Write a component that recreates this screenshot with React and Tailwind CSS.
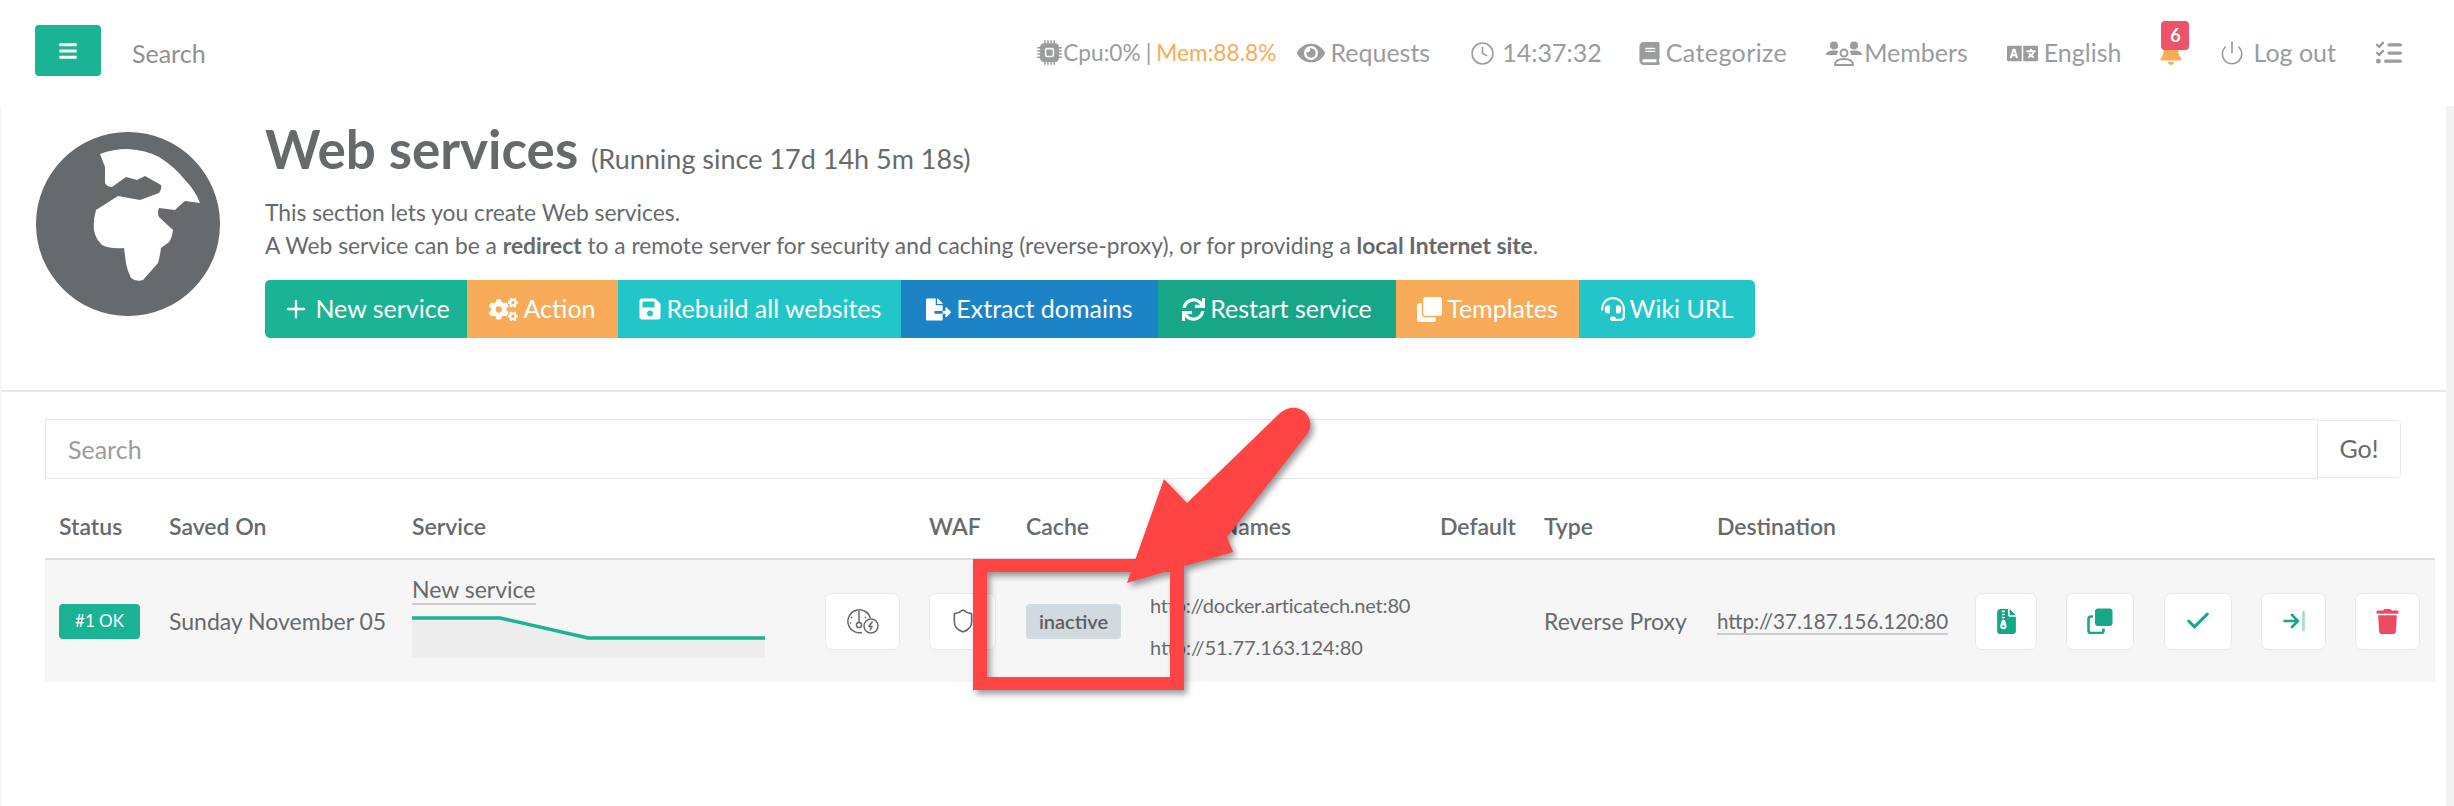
import { Check, Clock, Plus, Power, Shield } from "lucide-react";
import { BsCpuFill } from "react-icons/bs";
import {
  FaBars,
  FaBell,
  FaBook,
  FaClone,
  FaCogs,
  FaEye,
  FaFileExport,
  FaHeadset,
  FaLanguage,
  FaSave,
  FaSync,
  FaTrash,
} from "react-icons/fa";
import { FaFileZipper, FaListCheck } from "react-icons/fa6";

const toolbar = [
  { label: "New service", Icon: Plus, size: 28, width: "w-[202px]", color: "bg-[#1ab394]", round: "rounded-l-[5px]" },
  { label: "Action", Icon: FaCogs, size: 29, width: "w-[151px]", color: "bg-[#f8ac59]" },
  { label: "Rebuild all websites", Icon: FaSave, size: 24, width: "w-[283px]", color: "bg-[#23c6c8]" },
  { label: "Extract domains", Icon: FaFileExport, size: 25, width: "w-[257px]", color: "bg-[#1c84c6]" },
  { label: "Restart service", Icon: FaSync, size: 23, width: "w-[238px]", color: "bg-[#18a689]" },
  { label: "Templates", Icon: FaClone, size: 25, width: "w-[183px]", color: "bg-[#f8ac59]" },
  { label: "Wiki URL", Icon: FaHeadset, size: 24, width: "w-[176px]", color: "bg-[#23c6c8]", round: "rounded-r-[5px]" },
];

function GaugeIcon() {
  return (
    <svg width="32" height="25" viewBox="0 0 32 25" fill="none" stroke="#676a6c" strokeWidth="1.5">
      <path d="M15 23.5A11.5 11.5 0 1 1 23.4 9" />
      <path d="M12 2v11" />
      <circle cx="12" cy="16" r="2.6" />
      <circle cx="24" cy="17" r="7" />
      <path d="M25.5 12.5l-3.5 5h3l-2 4" strokeLinejoin="round" />
      <path d="M4 8l1 1M3 14h1M19 8l-1 1" />
    </svg>
  );
}

function MembersIcon() {
  return (
    <svg width="36" height="25" viewBox="0 0 36 25" fill="#9a9c9e">
      <circle cx="8" cy="4.5" r="4" />
      <circle cx="28" cy="4.5" r="4" />
      <path d="M0 14c0-3 3-4.500 8-4.500 2 0 3.500.3 4.500 1-1 1-1.500 2-1.500 3.500H0z" />
      <path d="M36 14c0-3-3-4.500-8-4.500-2 0-3.500.3-4.500 1 1 1 1.500 2 1.500 3.500h11z" />
      <circle cx="18" cy="12" r="3.500" fill="none" stroke="#9a9c9e" strokeWidth="2" />
      <path d="M9 24c0-4 3-6 9-6s9 2 9 6z" fill="none" stroke="#9a9c9e" strokeWidth="2" />
    </svg>
  );
}

function ArrowToLineIcon() {
  return (
    <svg width="22" height="20" viewBox="0 0 22 20" fill="none" stroke="#18a689" strokeWidth="2.600" strokeLinecap="round" strokeLinejoin="round">
      <path d="M1.500 10h13M9 4l6 6-6 6" />
      <path d="M20.500 1v18" opacity="0.4" />
    </svg>
  );
}

function CloneIcon() {
  return (
    <svg width="26" height="26" viewBox="0 0 26 26" fill="none">
      <rect x="8" y="0.500" width="17.500" height="17.500" rx="3" fill="#18a689" />
      <path d="M6 8.500H4A2.500 2.500 0 0 0 1.500 11V22.500A2.500 2.500 0 0 0 4 25h10a2.500 2.500 0 0 0 2.500-2.500V20.500" stroke="#18a689" strokeWidth="2.600" />
    </svg>
  );
}

function RowButton({ width, children }) {
  return (
    <button className={`${width} h-[57px] flex items-center justify-center bg-white border border-[#e7eaec] rounded-[7px]`}>
      {children}
    </button>
  );
}

export default function App() {
  return (
    <div className="relative min-h-[806px] bg-[#f3f3f4] text-[#676a6c] font-['Lato','Liberation_Sans',sans-serif] overflow-hidden">
      <nav className="h-[106px] bg-white flex items-start pt-[25px] pl-[35px] text-[25px] text-[#9a9c9e]">
        <button className="w-[66px] h-[51px] bg-[#1ab394] rounded-[4px] flex items-center justify-center text-white">
          <FaBars size={20} />
        </button>
        <input
          placeholder="Search"
          className="ml-[31px] w-[200px] h-[56px] text-[25px] outline-none placeholder:text-[#8f9193]"
        />
        <div className="ml-auto h-[56px] flex items-center pr-[52px]">
          <span className="flex items-center text-[22.7px]">
            <BsCpuFill size={25} className="mr-[1px]" />
            Cpu:0%
            <span className="mx-[5px]">|</span>
            <span className="text-[#f8ac59]">Mem:88.8%</span>
          </span>
          <span className="ml-[21px] flex items-center gap-[5px]">
            <FaEye size={28} />
            Requests
          </span>
          <span className="ml-[40px] flex items-center gap-[7px]">
            <Clock size={25} strokeWidth={1.500} />
            14:37:32
          </span>
          <span className="ml-[36px] flex items-center gap-[5px] tracking-[0.4px]">
            <FaBook size={23} />
            Categorize
          </span>
          <span className="ml-[39px] flex items-center gap-[2px]">
            <MembersIcon />
            Members
          </span>
          <span className="ml-[39px] flex items-center gap-[6px]">
            <FaLanguage size={31} />
            English
          </span>
          <span className="relative ml-[36px] w-[28px] flex justify-center">
            <FaBell size={24} className="text-[#f8ac59]" />
            <span className="absolute left-[4px] -top-[20px] w-[28px] h-[29px] rounded-[4px] bg-[#ef5369] text-white text-[18px] font-bold flex items-center justify-center">
              6
            </span>
          </span>
          <span className="ml-[34px] flex items-center gap-[8px]">
            <Power size={26} strokeWidth={1.500} />
            Log out
          </span>
          <FaListCheck size={26} className="ml-[40px]" />
        </div>
      </nav>

      <main className="ml-px mr-[8px] h-[700px] bg-white">
        <section className="h-[286px] border-b-2 border-[#e7eaec] flex pt-[26px] pl-[35px]">
          <svg width="184" height="184" viewBox="36 132 184 184" className="shrink-0">
            <circle cx="128" cy="224" r="92" fill="#676a6c" />
            <path
              fill="#fff"
              d="M100 154Q113 149 128 149Q146 150 159 157Q175 167 185 180Q195 190 200 203L185 201Q180 205 175 210L159 208Q157 212 159 217L173 230Q172 238 169 242L161 248Q160 256 158 263L143 280Q136 282 131 278Q127 270 126 263L124 248Q110 249 102 245Q95 238 94 230Q93 220 96 210L118 196L140 200L159 193Q162 189 161 185L145 176L137 180L126 177L112 187Q107 187 105 183L105 167Z"
            />
          </svg>
          <div className="ml-[45px]">
            <h2 className="-mt-[6px] text-[53px] leading-[46px] font-bold whitespace-nowrap">
              Web services <small className="text-[27px] font-normal">(Running since 17d 14h 5m 18s)</small>
            </h2>
            <p className="mt-[14px] text-[22.8px] leading-[33px] whitespace-nowrap">
              This section lets you create Web services.
              <br />A Web service can be a <b>redirect</b> to a remote server for security and caching
              (reverse-proxy), or for providing a <b>local Internet site</b>.
            </p>
            <div className="mt-[18px] flex text-white text-[25px]">
              {toolbar.map(({ label, Icon, size, width, color, round }) => (
                <button key={label} className={`${width} ${color} ${round || ""} h-[58px] flex items-center justify-center gap-[5px] whitespace-nowrap`}>
                  <Icon size={size} />
                  {label}
                </button>
              ))}
            </div>
          </div>
        </section>

        <section className="pt-[27px] pl-[44px]">
          <div className="flex w-[2356px] items-center">
            <input
              placeholder="Search"
              className="flex-1 h-[60px] px-[22px] text-[25px] border border-[#e5e6e7] outline-none placeholder:text-[#9a9c9e]"
            />
            <button className="w-[83px] h-[58px] border border-l-0 border-[#e7eaec] rounded-r-[5px] text-[25px]">Go!</button>
          </div>

          <table className="table-fixed w-[2390px] text-[23px] text-left">
            <colgroup>
              <col className="w-[110px]" />
              <col className="w-[243px]" />
              <col className="w-[413px]" />
              <col className="w-[104px]" />
              <col className="w-[97px]" />
              <col className="w-[124px]" />
              <col className="w-[290px]" />
              <col className="w-[104px]" />
              <col className="w-[173px]" />
              <col className="w-[258px]" />
              <col className="w-[91px]" />
              <col className="w-[98px]" />
              <col className="w-[97px]" />
              <col className="w-[94px]" />
              <col className="w-[94px]" />
            </colgroup>
            <thead>
              <tr className="h-[80px] border-b-2 border-[#dddddd]">
                {["Status", "Saved On", "Service", "", "WAF", "Cache", "Server Names", "Default", "Type", "Destination", "", "", "", "", ""].map((title, i) => (
                  <th key={i} className="pl-[14px] pb-[15px] align-bottom font-semibold whitespace-nowrap">
                    {title}
                  </th>
                ))}
              </tr>
            </thead>
            <tbody>
              <tr className="h-[123px] bg-[#f6f6f6]">
                <td className="pl-[14px]">
                  <span className="w-[81px] h-[35px] rounded-[4px] bg-[#1ab394] text-white text-[17px] flex items-center justify-center">#1 OK</span>
                </td>
                <td className="pl-[14px] whitespace-nowrap">Sunday November 05</td>
                <td className="pl-[14px] pb-[12px]">
                  <span className="inline-block leading-[28px] border-b-2 border-[#cccccc]">New service</span>
                  <svg width="353" height="42" viewBox="0 0 353 42" className="block mt-[9px]">
                    <path d="M0 2H88L176 22H353V42H0Z" fill="#ededed" />
                    <path d="M0 2H88L176 22H353" fill="none" stroke="#1ab394" strokeWidth="3.500" />
                  </svg>
                </td>
                <td className="pl-[14px]">
                  <RowButton width="w-[75px]">
                    <GaugeIcon />
                  </RowButton>
                </td>
                <td className="pl-[14px]">
                  <RowButton width="w-[67px]">
                    <Shield size={26} strokeWidth={1.500} />
                  </RowButton>
                </td>
                <td className="pl-[14px]">
                  <span className="w-[95px] h-[35px] rounded-[4px] bg-[#d1dade] text-[#5e5e5e] text-[20px] font-semibold flex items-center justify-center">inactive</span>
                </td>
                <td className="pl-[14px] pt-[9px] text-[20px] leading-[42px] whitespace-nowrap">
                  <span className="tracking-[-0.2px]">http://docker.articatech.net:80</span>
                  <br />
                  http://51.77.163.124:80
                </td>
                <td />
                <td className="pl-[14px] whitespace-nowrap">Reverse Proxy</td>
                <td className="pl-[14px] text-[20.6px] whitespace-nowrap">
                  <span className="border-b-2 border-[#cccccc]">http://37.187.156.120:80</span>
                </td>
                <td className="pl-[14px]">
                  <RowButton width="w-[62px]">
                    <FaFileZipper size={25} className="text-[#18a689]" />
                  </RowButton>
                </td>
                <td className="pl-[14px]">
                  <RowButton width="w-[68px]">
                    <CloneIcon />
                  </RowButton>
                </td>
                <td className="pl-[14px]">
                  <RowButton width="w-[68px]">
                    <Check size={28} strokeWidth={2.600} className="text-[#18a689]" />
                  </RowButton>
                </td>
                <td className="pl-[14px]">
                  <RowButton width="w-[65px]">
                    <ArrowToLineIcon />
                  </RowButton>
                </td>
                <td className="pl-[14px]">
                  <RowButton width="w-[65px]">
                    <FaTrash size={25} className="text-[#ef4a5f]" />
                  </RowButton>
                </td>
              </tr>
            </tbody>
          </table>
        </section>
      </main>

      {/* annotation drawn over the screenshot */}
      <svg
        width="380"
        height="310"
        viewBox="960 395 380 310"
        className="absolute left-[960px] top-[395px] pointer-events-none drop-shadow-[3px_4px_3px_rgba(0,0,0,0.4)]"
      >
        <path fill="#ff4444" fillRule="evenodd" d="M973 559H1184V690H973ZM987 572V677H1170V572Z" />
        <path
          fill="#ff4444"
          d="M1127 583L1164 479L1187 503L1280 413Q1293 403 1305 412Q1314 422 1308 433L1227 537L1233 552Z"
        />
      </svg>
    </div>
  );
}
